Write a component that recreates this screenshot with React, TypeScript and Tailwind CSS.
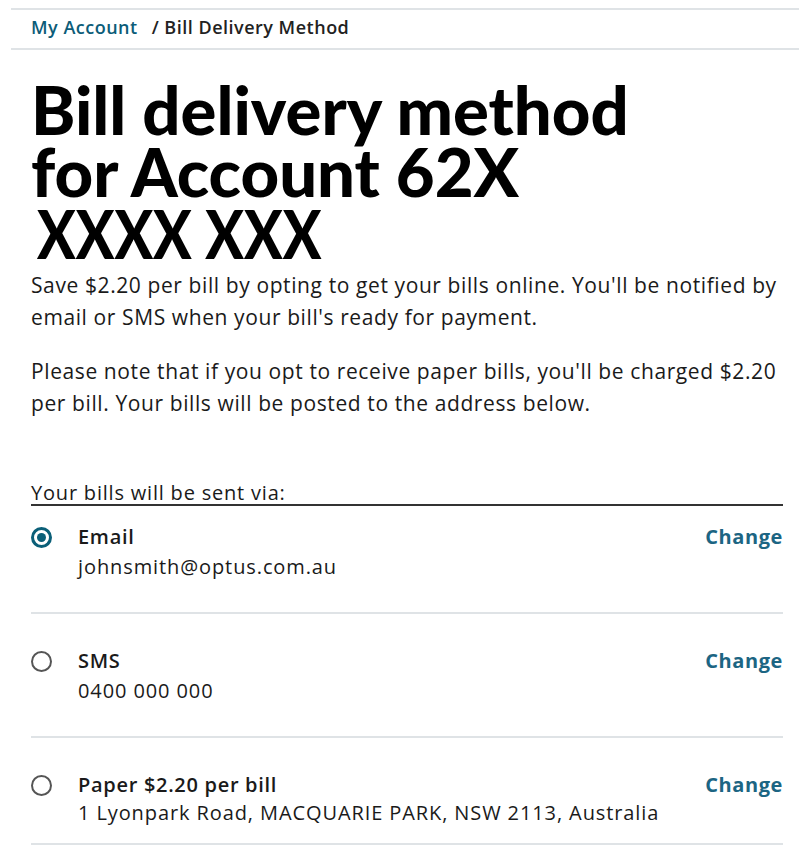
import React from "react";

const body = { fontFamily: "'Open Sans', 'Noto Sans', sans-serif" };
const title = { fontFamily: "Lato, 'Noto Sans', sans-serif" };

function Radio({ checked }: { checked: boolean }) {
  return checked ? (
    <span className="flex h-[21px] w-[21px] items-center justify-center rounded-full border-[3px] border-[#0b5f78]">
      <span className="h-[9px] w-[9px] rounded-full bg-[#0b5f78]" />
    </span>
  ) : (
    <span className="h-[21px] w-[21px] rounded-full border-[2px] border-[#555]" />
  );
}

function Row({
  checked,
  title,
  value,
  first,
  last,
}: {
  checked: boolean;
  title: string;
  value: string;
  first?: boolean;
  last?: boolean;
}) {
  const cls = first
    ? "flex border-b-2 border-[#dfe3e6] pb-[30px] pt-[16px]"
    : last
    ? "flex border-b-2 border-[#dfe3e6] pb-[17px] pt-[32px]"
    : "flex border-b-2 border-[#dfe3e6] pb-[30px] pt-[32px]";
  return (
    <div className={cls}>
      <div className="flex w-[47px] pt-[5px]">
        <Radio checked={checked} />
      </div>
      <div className="flex-1">
        <div className="text-[20px] font-semibold leading-[30px] tracking-[0.7px] text-[#1a1a1a]">{title}</div>
        <div className={last ? "text-[20px] leading-[26px] tracking-[0.9px] text-[#1a1a1a]" : "text-[20px] leading-[30px] tracking-[0.9px] text-[#1a1a1a]"}>
          {value}
        </div>
      </div>
      <div className="text-[20px] font-bold leading-[30px] tracking-[0.6px] text-[#1c6583]">Change</div>
    </div>
  );
}

export default function App() {
  return (
    <div className="min-h-screen w-[799px] bg-white" style={body}>
      <div className="pt-[8px]">
        <div className="ml-[11px] flex h-[42px] items-center border-y-2 border-[#dfe3e6] pb-[4px] pl-[20px] text-[18px] font-semibold tracking-[0.5px]">
          <span className="text-[#0c5c78]">My Account</span>
          <span className="ml-[14px] text-[#222]">/ Bill Delivery Method</span>
        </div>
      </div>
      <div className="px-[31px] pr-[16px]">
        <h1 className="mt-[28px] text-[67px] font-black leading-[62px] text-black" style={title}>
          Bill delivery method
          <br />
          for Account 62X
          <br />
          <span className="ml-[6px] inline-block origin-left scale-x-[0.85]">XXXX XXX</span>
        </h1>
        <p className="-mr-[10px] mt-[5px] text-[21px] leading-[32px] tracking-[0.6px] text-[#1a1a1a]">
          Save $2.20 per bill by opting to get your bills online. You'll be notified by email or SMS when your bill's ready for payment.
        </p>
        <p className="-mr-[10px] mt-[22px] text-[21px] leading-[32px] tracking-[0.6px] text-[#1a1a1a]">
          Please note that if you opt to receive paper bills, you'll be charged $2.20 per bill. Your bills will be posted to the address below.
        </p>
        <div className="mt-[63px] border-b-2 border-[#333] text-[20px] leading-[22px] tracking-[0.8px] text-[#1a1a1a]">
          Your bills will be sent via:
        </div>
        <div>
          <Row first checked title="Email" value="johnsmith@optus.com.au" />
          <Row checked={false} title="SMS" value="0400 000 000" />
          <Row last checked={false} title="Paper $2.20 per bill" value="1 Lyonpark Road, MACQUARIE PARK, NSW 2113, Australia" />
        </div>
      </div>
    </div>
  );
}
